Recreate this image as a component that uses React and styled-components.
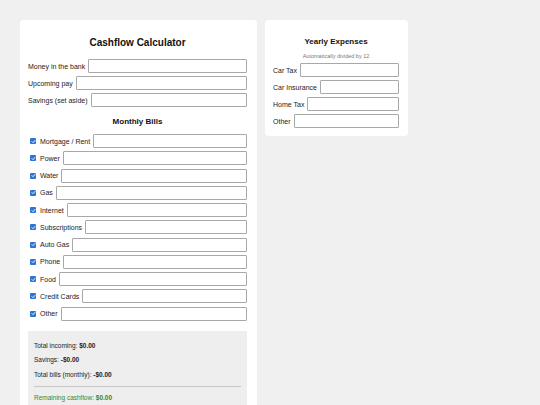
import React from 'react';
import styled, { createGlobalStyle } from 'styled-components';

const GlobalStyle = createGlobalStyle`
  * { box-sizing: border-box; }
  body {
    margin: 0;
    background: #f0f0f0;
    font-family: "Liberation Sans", Arial, sans-serif;
    color: #222;
  }
`;

const Page = styled.div`
  display: flex;
  align-items: flex-start;
  gap: 8px;
  padding: 20px 0 0 20px;
`;

const Card = styled.div`
  width: ${props => props.width}px;
  background: #fff;
  border-radius: 4px;
  padding: 8px ${props => props.padRight}px 8px 8px;
  display: flex;
  flex-direction: column;
`;

const Title = styled.h2`
  margin: ${props => props.margin};
  font-size: ${props => props.size}px;
  line-height: ${props => props.size + 2}px;
  font-weight: 700;
  text-align: center;
  color: #111;
`;

const Subtitle = styled.p`
  margin: 6px 0 3px;
  font-size: 5.5px;
  line-height: 7px;
  text-align: center;
  color: #777;
`;

const Fields = styled.div`
  display: flex;
  flex-direction: column;
  gap: ${props => props.gap || 3}px;
`;

const Row = styled.label`
  display: flex;
  align-items: center;
  height: 14px;
  font-size: 7px;
  color: #222;
  white-space: nowrap;
`;

const LabelText = styled.span`
  margin-right: 3px;
`;

const Input = styled.input`
  flex: 1;
  min-width: 0;
  height: 14px;
  border: 1px solid #a8a8a8;
  border-radius: 1px;
  background: #fff;
  padding: 0 3px;
  font-size: 7px;
  font-family: inherit;
`;

const Check = styled.span`
  width: 6px;
  height: 6px;
  margin: 0 4px 0 2px;
  border-radius: 1px;
  background: #2f73d6;
  display: flex;
  align-items: center;
  justify-content: center;
  flex-shrink: 0;
`;

const Summary = styled.div`
  margin-top: 10px;
  background: #eeeeee;
  padding: 8px 6px 14px;
  display: flex;
  flex-direction: column;
`;

const SummaryLine = styled.p`
  margin: 0;
  font-size: 6.5px;
  line-height: 14.5px;
  color: ${props => props.color || '#222'};
`;

const Divider = styled.hr`
  border: none;
  border-top: 1px solid #c8c8c8;
  margin: 4px 0 4px;
`;

const bank = ['Money in the bank', 'Upcoming pay', 'Savings (set aside)'];
const bills = [
  'Mortgage / Rent', 'Power', 'Water', 'Gas', 'Internet', 'Subscriptions',
  'Auto Gas', 'Phone', 'Food', 'Credit Cards', 'Other',
];
const yearly = ['Car Tax', 'Car Insurance', 'Home Tax', 'Other'];

function CheckMark() {
  return (
    <svg width="5" height="5" viewBox="0 0 10 10">
      <path d="M2 5.2 L4.2 7.4 L8.2 2.8" fill="none" stroke="#fff" strokeWidth="1.8" strokeLinecap="round" strokeLinejoin="round" />
    </svg>
  );
}

export default function App() {
  return (
    <>
      <GlobalStyle />
      <Page>
        <Card width={237} padRight={10}>
          <Title size={10} margin="9px 0 10px">Cashflow Calculator</Title>
          <Fields>
            {bank.map(name => (
              <Row key={name}>
                <LabelText>{name}</LabelText>
                <Input type="text" />
              </Row>
            ))}
          </Fields>
          <Title size={8} margin="10px 0 7px">Monthly Bills</Title>
          <Fields gap={3.25}>
            {bills.map(name => (
              <Row key={name}>
                <Check><CheckMark /></Check>
                <LabelText>{name}</LabelText>
                <Input type="text" />
              </Row>
            ))}
          </Fields>
          <Summary>
            <SummaryLine>Total incoming: <b>$0.00</b></SummaryLine>
            <SummaryLine>Savings: <b>-$0.00</b></SummaryLine>
            <SummaryLine>Total bills (monthly): <b>-$0.00</b></SummaryLine>
            <Divider />
            <SummaryLine color="#2e8b2e">Remaining cashflow: <b>$0.00</b></SummaryLine>
          </Summary>
        </Card>
        <Card width={143} padRight={9}>
          <Title size={8} margin="9px 0 0">Yearly Expenses</Title>
          <Subtitle>Automatically divided by 12</Subtitle>
          <Fields>
            {yearly.map(name => (
              <Row key={name}>
                <LabelText>{name}</LabelText>
                <Input type="text" />
              </Row>
            ))}
          </Fields>
        </Card>
      </Page>
    </>
  );
}
